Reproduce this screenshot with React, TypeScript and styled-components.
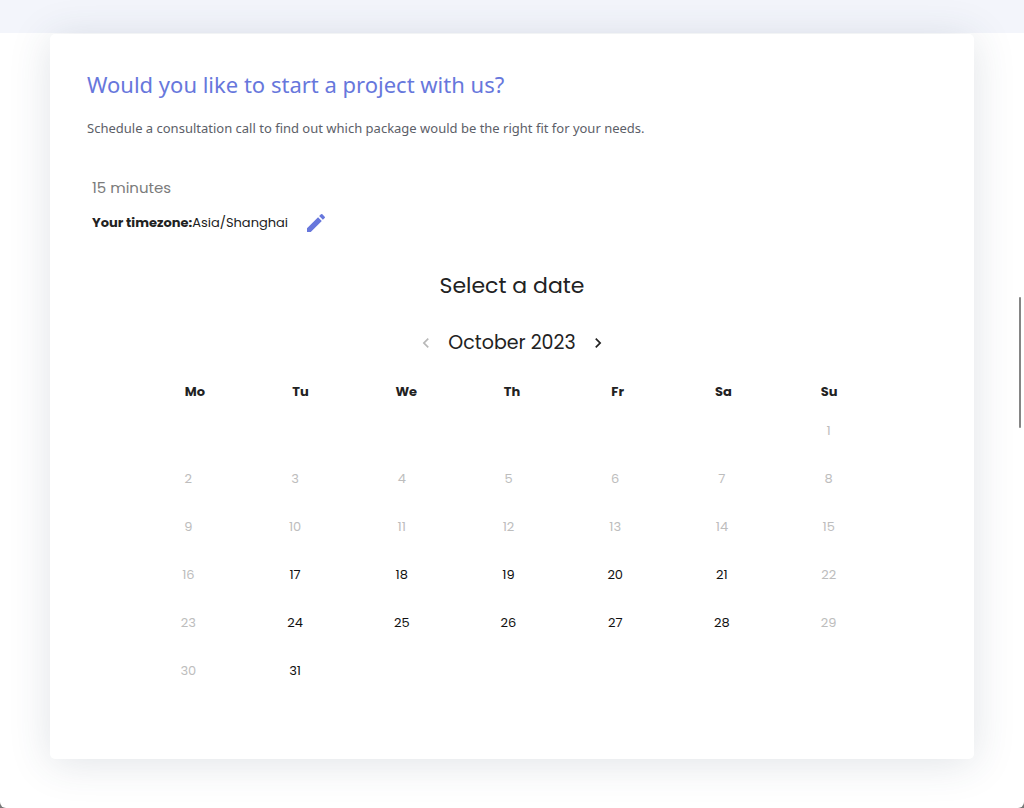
import React from "react";
import styled, { createGlobalStyle } from "styled-components";

const uiFont = '"Segoe UI", "Noto Sans", sans-serif';
const calendarFont = 'Poppins, Inter, sans-serif';

const GlobalStyle = createGlobalStyle`
  * { box-sizing: border-box; }
  body { margin: 0; background: #777; font-family: ${calendarFont}; color: #222; }
`;

const Page = styled.main`
  position: relative;
  min-height: 100vh;
  overflow: hidden;
  padding: 34px 50px 49px;
  border-radius: 0 0 6px 6px;
  background: linear-gradient(#f3f5fb 33px, #fff 33px);
`;

const Card = styled.section`
  min-height: 725px;
  padding: 34px 37px 54px;
  border-radius: 5px;
  background: #fff;
  box-shadow: 0 4px 42px rgba(50, 66, 96, 0.15);
`;

const Title = styled.h2`
  margin: 0;
  font: 400 22px/32px ${uiFont};
  color: #6777dc;
`;

const Intro = styled.p`
  margin: 18px 0 0;
  font: 400 13px/20px ${uiFont};
  color: #5c6068;
`;

const Meeting = styled.div`
  padding: 38px 0 0 5px;
`;

const Duration = styled.p`
  margin: 0;
  font-size: 15px;
  line-height: 24px;
  color: #7b7b7b;
`;

const Timezone = styled.div`
  display: flex;
  align-items: center;
  height: 24px;
  margin-top: 11px;
  font-size: 13px;
  line-height: 24px;
`;

const IconButton = styled.button`
  display: flex;
  align-items: center;
  justify-content: center;
  width: 24px;
  height: 24px;
  padding: 0;
  border: 0;
  background: none;
  color: #222;
  &:disabled { color: #b8b8b8; }
`;

const EditButton = styled(IconButton)`
  margin-left: 16px;
  color: #6777dc;
`;

const Prompt = styled.h3`
  margin: 35px 0 0;
  font-size: 22px;
  font-weight: 400;
  line-height: 32px;
  text-align: center;
`;

const MonthNav = styled.nav`
  display: flex;
  align-items: center;
  justify-content: center;
  gap: 10px;
  margin-top: 25px;
`;

const Month = styled.h4`
  margin: 0;
  font-size: 19px;
  font-weight: 400;
  line-height: 32px;
`;

const Calendar = styled.table`
  display: block;
  margin: 21px 55px 0 48px;
  font-size: 13px;
`;

const Head = styled.thead`
  display: block;
  padding-left: 7px;
`;

const Body = styled.tbody`
  display: block;
  padding-top: 3px;
`;

const Week = styled.tr`
  display: grid;
  grid-template-columns: repeat(7, 1fr);
`;

const Weekday = styled.th`
  padding: 0;
  line-height: 24px;
  font-weight: 700;
`;

const Cell = styled.td`
  display: flex;
  justify-content: center;
  height: 48px;
  padding: 0;
`;

const Day = styled.button`
  width: 48px;
  height: 48px;
  padding: 0;
  border: 0;
  background: none;
  font: 400 13px/24px ${calendarFont};
  color: #111;
  &:disabled { color: #bdbdbd; }
`;

const ScrollThumb = styled.div`
  position: absolute;
  top: 297px;
  right: 3px;
  width: 2px;
  height: 131px;
  border-radius: 1px;
  background: #858585;
`;

const weekdays = ["Mo", "Tu", "We", "Th", "Fr", "Sa", "Su"];
const openDays = [17, 18, 19, 20, 21, 24, 25, 26, 27, 28, 31];
const weeks = Array.from({ length: 6 }, (_, week) =>
  Array.from({ length: 7 }, (_, day) => week * 7 + day - 5)
);

function Chevron({ d }: { d: string }) {
  return (
    <svg width="20" height="20" viewBox="0 0 24 24" fill="currentColor" aria-hidden="true">
      <path d={d} />
    </svg>
  );
}

export default function App() {
  return (
    <>
      <GlobalStyle />
      <Page>
        <Card>
          <Title>Would you like to start a project with us?</Title>
          <Intro>Schedule a consultation call to find out which package would be the right fit for your needs.</Intro>
          <Meeting>
            <Duration>15 minutes</Duration>
            <Timezone>
              <strong>Your timezone:</strong>
              <span>Asia/Shanghai</span>
              <EditButton aria-label="Edit timezone">
                <svg width="24" height="24" viewBox="0 0 24 24" fill="currentColor" aria-hidden="true">
                  <path d="M3 17.25V21h3.75L17.81 9.94l-3.75-3.75L3 17.25zM20.71 7.04a1 1 0 0 0 0-1.41l-2.34-2.34a1 1 0 0 0-1.41 0l-1.83 1.83 3.75 3.75 1.83-1.83z" />
                </svg>
              </EditButton>
            </Timezone>
          </Meeting>
          <Prompt>Select a date</Prompt>
          <MonthNav aria-label="Month">
            <IconButton disabled aria-label="Previous month">
              <Chevron d="M15.41 7.41 14 6l-6 6 6 6 1.41-1.41L10.83 12z" />
            </IconButton>
            <Month>October 2023</Month>
            <IconButton aria-label="Next month">
              <Chevron d="M10 6 8.59 7.41 13.17 12l-4.58 4.59L10 18l6-6z" />
            </IconButton>
          </MonthNav>
          <Calendar>
            <Head>
              <Week>
                {weekdays.map((name) => (
                  <Weekday key={name} scope="col">{name}</Weekday>
                ))}
              </Week>
            </Head>
            <Body>
              {weeks.map((days, index) => (
                <Week key={index}>
                  {days.map((day) => (
                    <Cell key={day}>
                      {day > 0 && day < 32 && <Day disabled={!openDays.includes(day)}>{day}</Day>}
                    </Cell>
                  ))}
                </Week>
              ))}
            </Body>
          </Calendar>
        </Card>
        <ScrollThumb />
      </Page>
    </>
  );
}
